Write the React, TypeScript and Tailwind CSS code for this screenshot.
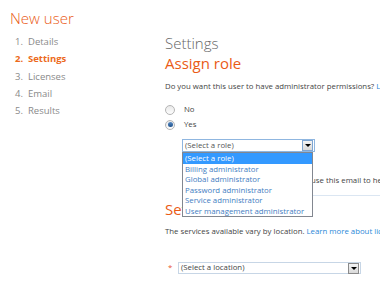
import type { ReactNode } from "react";

const steps = ["Details", "Settings", "Licenses", "Email", "Results"];
const roles = [
  "(Select a role)",
  "Billing administrator",
  "Global administrator",
  "Password administrator",
  "Service administrator",
  "User management administrator",
];

function Radio({ checked, children }: { checked?: boolean; children: ReactNode }) {
  return (
    <label className="flex h-[15px] items-center">
      <span className="flex h-[10px] w-[10px] items-center justify-center rounded-full border border-[#b5b5b5] bg-gradient-to-b from-[#e9e9e9] to-[#fdfdfd]">
        {checked && <span className="h-[5px] w-[5px] rounded-full bg-gradient-to-b from-[#5a8cc4] to-[#1a4f8a]" />}
      </span>
      <span className="ml-[9px] text-[#444]">{children}</span>
    </label>
  );
}

function DropButton({ className }: { className: string }) {
  return (
    <span
      className={`flex h-[11px] w-[11px] items-center justify-center border bg-gradient-to-b from-[#f4f4f4] to-[#d9d9d9] ${className}`}
    >
      <span className="h-0 w-0 border-x-[3px] border-t-[3px] border-x-transparent border-t-black" />
    </span>
  );
}

function Steps() {
  return (
    <aside className="w-[165px] shrink-0 pl-[10px] pt-[8px]">
      <h1 className="text-[15px] leading-[20px] font-light text-[#ea5b16]">New user</h1>
      <ol className="mt-[5px] pl-[5px] text-[9.5px] leading-[17.25px] text-[#8a8a8a]">
        {steps.map((s, i) => (
          <li key={s} className={i === 1 ? "flex font-bold text-[#ec6a1c]" : "flex"}>
            <span className="w-[13px]">{i + 1}.</span>
            <span>{s}</span>
          </li>
        ))}
      </ol>
    </aside>
  );
}

function Main() {
  return (
    <main className="flex-1 whitespace-nowrap pt-[33px] text-[7.8px] text-[#444]">
      <h2 className="text-[15px] leading-[20px] font-light text-[#666]">Settings</h2>
      <h3 className="text-[15px] leading-[20px] text-[#ea5b16]">Assign role</h3>
      <p className="mt-[7px] leading-[12px]">
        Do you want this user to have administrator permissions?{" "}
        <a className="text-[#2b88d8]">Learn more about administrator roles</a>
      </p>
      <div className="mt-[10px] flex flex-col">
        <Radio>No</Radio>
        <Radio checked>Yes</Radio>
      </div>

      <div className="relative ml-[17px] mt-[7px] w-[133px]">
        <div className="flex h-[13px] items-center justify-between border border-[#8fb6e0] bg-white pl-[2px] pr-px">
          <span className="text-[#555]">(Select a role)</span>
          <DropButton className="border-[#7fa6d2]" />
        </div>
        <ul className="absolute left-0 top-full z-10 w-[131px] border border-[#828790] bg-white">
          {roles.map((r, i) => (
            <li
              key={r}
              className={
                i === 0
                  ? "h-[10.5px] bg-[#3399ff] pl-[2px] leading-[10.5px] text-white"
                  : "h-[10.5px] pl-[2px] leading-[10.5px] text-[#3f7dc2]"
              }
            >
              {r}
            </li>
          ))}
        </ul>
      </div>

      <p className="ml-[128px] mt-[22px] leading-[12px]">we'll use this email to help you reset your password</p>
      <div className="ml-[17px] mt-[9px] h-px bg-[#dbe6f2]" />

      <h3 className="mt-[3px] text-[15px] leading-[20px] text-[#ea5b16]">Set user location</h3>
      <p className="mt-[6px] leading-[12px]">
        The services available vary by location.{" "}
        <a className="text-[#2b88d8]">Learn more about licensing restrictions</a>
      </p>
      <div className="mt-[25px] flex items-center">
        <span className="w-[13px] pl-[3px] text-[#e8532a]">*</span>
        <div className="flex h-[12px] w-[183px] items-center justify-between border border-[#c7d6e6] pl-[2px] pr-px">
          <span className="text-[#444]">(Select a location)</span>
          <DropButton className="border-[#8a8a8a]" />
        </div>
      </div>
    </main>
  );
}

export default function App() {
  return (
    <div className="relative h-[282px] w-[380px] overflow-hidden bg-white font-['Open_Sans',sans-serif]">
      <div className="flex">
        <Steps />
        <Main />
      </div>
    </div>
  );
}
